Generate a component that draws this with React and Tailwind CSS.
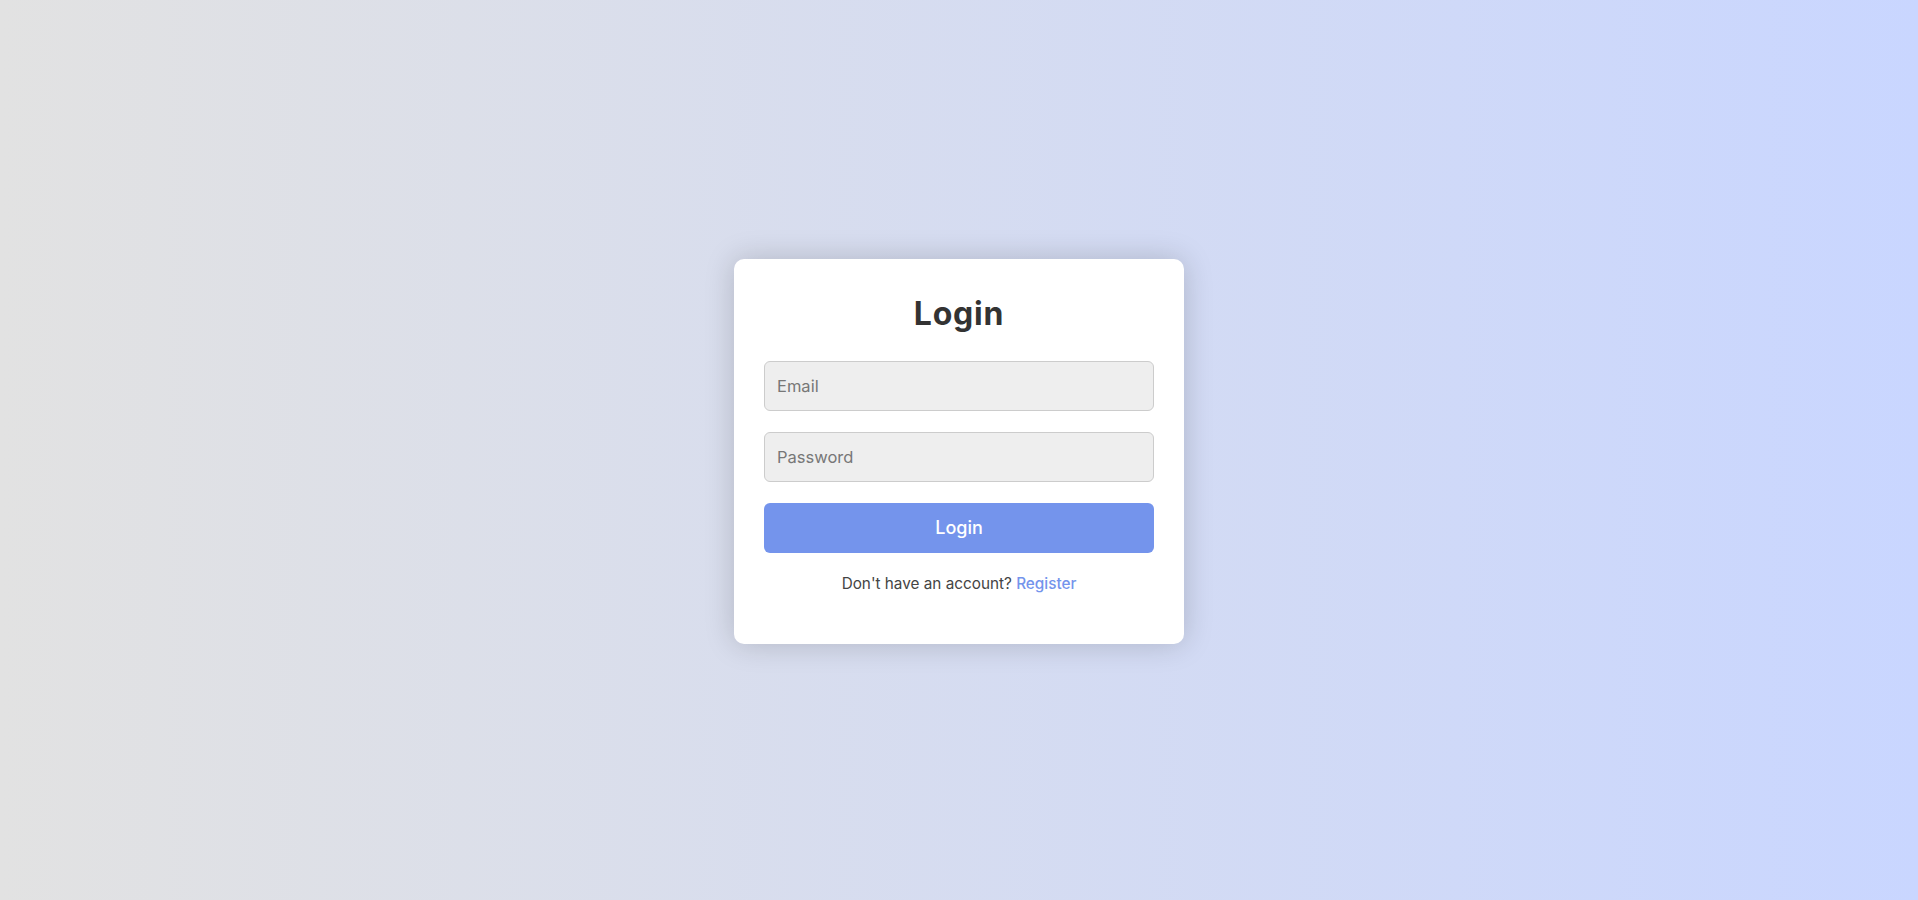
export default function App() {
  return (
    <div className="min-h-screen w-full flex items-center justify-center pt-[3px] bg-[linear-gradient(to_right,#e2e2e2,#c9d6ff)] font-['Inter',sans-serif]">
      <div className="w-[450px] rounded-[10px] bg-white px-[30px] pt-[30px] pb-[29px] shadow-[0_0_30px_rgba(0,0,0,0.18)]">
        <h1 className="pt-[2px] text-center text-[32px] leading-[45px] font-bold text-[#333] mb-[25px] tracking-[0.8px]">
          Login
        </h1>
        <form className="flex flex-col gap-[21px]" onSubmit={(e) => e.preventDefault()}>
          <input
            type="email"
            placeholder="Email"
            className="h-[50px] w-full rounded-[6px] border border-[#ccc] bg-[#eee] px-[12px] text-[16.5px] text-[#333] placeholder:text-[#777] outline-none"
          />
          <input
            type="password"
            placeholder="Password"
            className="h-[50px] w-full rounded-[6px] border border-[#ccc] bg-[#eee] px-[12px] text-[16.5px] text-[#333] placeholder:text-[#777] outline-none"
          />
          <button
            type="submit"
            className="h-[50px] w-full rounded-[6px] bg-[#7494ec] text-[18px] font-medium text-white"
          >
            Login
          </button>
        </form>
        <p className="mt-[20px] mb-[20px] text-center text-[15.3px] leading-[22.5px] text-[#444]">
          Don't have an account?{" "}
          <a href="#" className="font-medium text-[#7494ec]">
            Register
          </a>
        </p>
      </div>
    </div>
  );
}
